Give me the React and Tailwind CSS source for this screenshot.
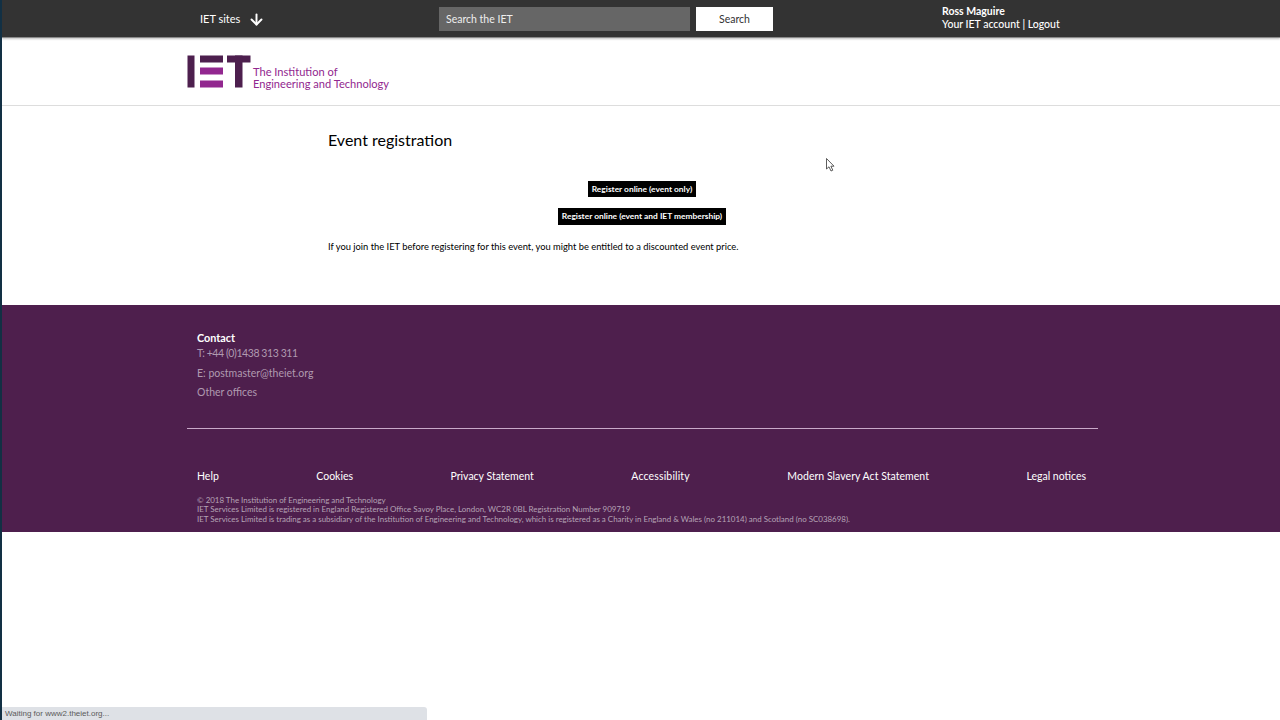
import { ArrowDown } from 'lucide-react';

const footerLinks = [
  { label: 'Help', extra: '' },
  { label: 'Cookies', extra: '' },
  { label: 'Privacy Statement', extra: '' },
  { label: 'Accessibility', extra: 'tracking-[0.15px]' },
  { label: 'Modern Slavery Act Statement', extra: 'tracking-[0.04px]' },
  { label: 'Legal notices', extra: '' },
];

function Logo() {
  return (
    <svg width="64" height="33" viewBox="0 0 64 33" className="shrink-0">
      <rect x="0.5" y="0.5" width="7" height="32" fill="#4d1f4e" />
      <rect x="13" y="0.5" width="23" height="7" fill="#4d1f4e" />
      <rect x="13" y="12.5" width="23" height="7" fill="#92278f" />
      <rect x="13" y="25.5" width="23" height="7" fill="#92278f" />
      <rect x="40" y="0.5" width="23.5" height="7" fill="#4d1f4e" />
      <rect x="48" y="0.5" width="7.5" height="32" fill="#4d1f4e" />
    </svg>
  );
}

export default function App() {
  return (
    <div className="h-[720px] flex flex-col overflow-hidden bg-white border-l-2 border-[#123044] text-black font-['Lato','Noto_Sans',sans-serif]">
      {/* Top bar */}
      <header className="h-[38px] shrink-0 bg-[#333333] border-b border-[#8a8a8a] shadow-[0_1px_2px_rgba(0,0,0,0.25)] flex items-center text-white text-[10.5px]">
        <div className="ml-[198px] w-[239px] flex items-center pt-px">
          <span className="text-[11px]">IET sites</span>
          <ArrowDown className="ml-[8px] w-[17px] h-[17px]" strokeWidth={2.75} />
        </div>
        <div className="w-[251px] h-[24px] bg-[#666666] flex items-center px-[7px] pt-[2px] text-[#eeeeee]">Search the IET</div>
        <button className="ml-[6px] w-[77px] h-[24px] pt-[2px] bg-white text-[#333333]">Search</button>
        <div className="ml-[169px] leading-[13px] pb-[1px]">
          <div className="font-bold">Ross Maguire</div>
          <div className="font-medium">Your IET account | Logout</div>
        </div>
      </header>

      {/* Logo row */}
      <div className="h-[68px] shrink-0 border-b border-[#dddddd] flex pl-[185px] pt-[17px]">
        <Logo />
        <div className="ml-[2px] mt-[11px] text-[11.1px] leading-[12px] text-[#92278f]">
          <div>The Institution of</div>
          <div>Engineering and Technology</div>
        </div>
      </div>

      {/* Main content */}
      <main className="h-[199px] shrink-0 pl-[326px] pt-[24px]">
        <div className="w-[628px]">
          <h1 className="text-[16px] leading-[20px]">Event registration</h1>
          <div className="mt-[31px] flex flex-col items-center gap-[11px]">
            <a className="h-[16px] px-[4px] bg-black text-white text-[8.4px] font-bold flex items-center">Register online (event only)</a>
            <a className="h-[17px] px-[4px] bg-black text-white text-[8.4px] font-bold flex items-center">Register online (event and IET membership)</a>
          </div>
          <p className="mt-[16px] text-[9.35px] leading-[12px]">If you join the IET before registering for this event, you might be entitled to a discounted event price.</p>
        </div>
      </main>

      {/* Footer */}
      <footer className="h-[227px] shrink-0 bg-[#4e1f4d] pl-[185px] pt-[26px]">
        <div className="w-[911px]">
          <div className="pl-[10px] h-[97px] border-b border-[#c9a9c9] box-content text-[10.5px] text-[#b09ab0]">
            <div className="font-bold text-[10.8px] text-white leading-[14px]">Contact</div>
            <div className="leading-[15px] mt-[1px] tracking-[-0.42px]">T: +44 (0)1438 313 311</div>
            <div className="leading-[15px] mt-[5px]">E: postmaster@theiet.org</div>
            <div className="leading-[15px] mt-[4px]">Other offices</div>
          </div>
          <nav className="mt-[40px] pl-[10px] flex gap-[97.5px] text-[10.5px] leading-[14px] text-white">
            {footerLinks.map((link) => (
              <a key={link.label} className={link.extra}>{link.label}</a>
            ))}
          </nav>
          <div className="mt-[13px] pl-[10px] text-[7.95px] leading-[9.3px] text-[#b5a3b5]">
            <div>© 2018 The Institution of Engineering and Technology</div>
            <div>IET Services Limited is registered in England Registered Office Savoy Place, London, WC2R 0BL Registration Number 909719</div>
            <div>IET Services Limited is trading as a subsidiary of the Institution of Engineering and Technology, which is registered as a Charity in England &amp; Wales (no 211014) and Scotland (no SC038698).</div>
          </div>
        </div>
      </footer>

      <div className="flex-1 relative">
        {/* browser status bubble */}
        <div className="absolute left-[-2px] bottom-0 w-[427px] h-[13px] bg-[#dee1e6] rounded-tr-[3px] pl-[5px] text-[8px] leading-[14px] text-[#5a5a5a] font-['Liberation_Sans',sans-serif]">
          Waiting for www2.theiet.org...
        </div>
      </div>

      {/* mouse cursor */}
      <svg width="9" height="14" viewBox="0 0 9 14" className="absolute left-[826px] top-[158px]">
        <path d="M0.5 0.5 V11 L3 8.8 L5 13 L6.8 12.2 L4.9 8.2 H8 Z" fill="#ffffff" stroke="#333333" strokeWidth="0.8" />
      </svg>
    </div>
  );
}
